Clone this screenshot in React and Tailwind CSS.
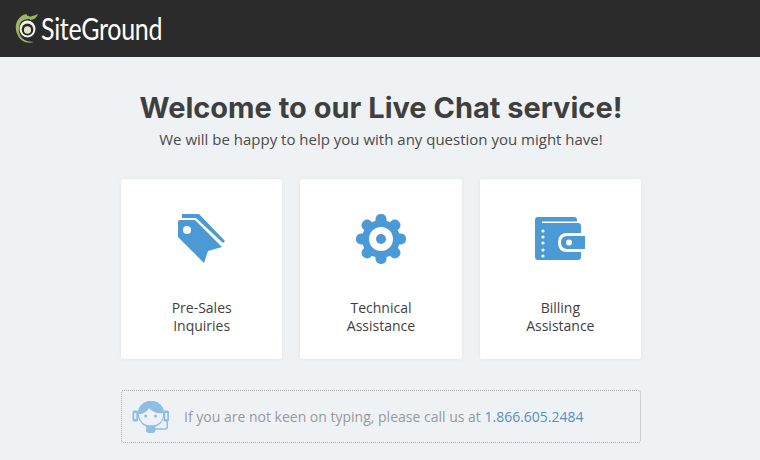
function Logo() {
  return (
    <div className="flex items-center">
      <svg width="26" height="32" viewBox="0 0 26 32" className="shrink-0">
        <path d="M8 2 C3 5 0 10 1 17 C2 23 6 27 8 28 C11 30 16 30 19 29 C15 29 10 28 7 25 C3 21 3 13 6 9 C9 6 13 6 15 6 C16 4 14 2 12 3 C13 1 10 1 8 2 Z" fill="#9db565" />
        <path d="M14 4 C18 3 21 2 23 1 C22 4 19 7 15 7 Z" fill="#9db565" />
        <ellipse cx="12.5" cy="16" rx="8" ry="8.5" fill="#f4f4ee" />
        <ellipse cx="12.5" cy="16.5" rx="5.8" ry="6" fill="#262626" />
        <ellipse cx="12.5" cy="17" rx="3.6" ry="3.8" fill="#dfe6c8" />
      </svg>
      <span className="inline-block text-[25px] leading-none tracking-[-0.3px] text-white scale-y-[1.2] ml-[0px] font-['Lato',sans-serif]">SiteGround</span>
    </div>
  );
}

function Tag() {
  return (
    <svg width="48" height="52" viewBox="0 0 48 52">
      <path d="M2 7 H17 L44 34 L30 38 L26 50 L0 24 V9 Q0 7 2 7 Z" fill="#4b9ad6" />
      <path d="M4 1 H21 L47 28 L45 30 L18 5 H4 Z" fill="#4b9ad6" />
      <circle cx="9" cy="17" r="4" fill="#fff" />
    </svg>
  );
}

function Gear() {
  const teeth = [0, 45, 90, 135, 180, 225, 270, 315];
  return (
    <svg width="52" height="52" viewBox="0 0 52 52">
      <circle cx="26" cy="26" r="19" fill="#4b9ad6" />
      {teeth.map((a) => (
        <rect key={a} x="20.5" y="1" width="11" height="12" rx="5" fill="#4b9ad6" transform={`rotate(${a} 26 26)`} />
      ))}
      <circle cx="26" cy="26" r="12" fill="#fff" />
      <circle cx="26" cy="26" r="5" fill="#4b9ad6" />
    </svg>
  );
}

function Wallet() {
  return (
    <svg width="50" height="43" viewBox="0 0 50 43" className="mb-[2px]">
      <path d="M3 0 H39 Q42 0 42 3 V4.5 H7 V6 H43 Q46 6 46 9 V16 H32 Q23 16 23 25.5 Q23 35 32 35 H46 V40 Q46 43 43 43 H3 Q0 43 0 40 V3 Q0 0 3 0 Z" fill="#4b9ad6" />
      <path d="M32 19 H50 V32 H32 Q26 32 26 25.5 Q26 19 32 19 Z" fill="#4b9ad6" />
      <circle cx="34" cy="25.5" r="3" fill="#fff" />
      {[14, 20, 26, 33, 39].map((y) => (
        <circle key={y} cx="8" cy={y} r="1.6" fill="#fff" />
      ))}
    </svg>
  );
}

function Agent() {
  return (
    <svg width="37" height="33" viewBox="0 0 37 33" className="mt-[1px]">
      <circle cx="19" cy="13" r="13.3" fill="#8fbee4" />
      <path d="M7 13 C11 13 15 11 17 7 C20 11 26 13 31 12 C32 20 26 24.5 19 24.5 C12 24.5 7 20 7 13 Z" fill="#eef1f5" />
      <rect x="0.5" y="9.5" width="5.5" height="11" rx="1.5" fill="#8fbee4" />
      <rect x="2.3" y="12" width="2" height="6" fill="#eef1f5" />
      <rect x="31.5" y="9.5" width="5.5" height="11" rx="1.5" fill="#8fbee4" />
      <rect x="33.3" y="12" width="2" height="6" fill="#eef1f5" />
      <circle cx="13.7" cy="15" r="1.5" fill="#8fbee4" />
      <circle cx="23.5" cy="15" r="1.5" fill="#8fbee4" />
      <path d="M35.3 20 V26 Q35.3 28 33 28 H23" stroke="#8fbee4" strokeWidth="1.5" fill="none" />
      <rect x="14" y="24.5" width="9.5" height="7.5" rx="3" fill="#8fbee4" />
    </svg>
  );
}

function Card({ icon, lines }) {
  return (
    <div className="bg-white rounded-[3px] h-[180px] flex flex-col items-center shadow-[0_0_4px_rgba(0,0,0,0.06)]">
      <div className="h-[120px] w-full flex items-center justify-center">{icon}</div>
      <div className="text-[14px] leading-[18px] text-[#3f3f3f] text-center">
        {lines.map((l) => (
          <div key={l}>{l}</div>
        ))}
      </div>
    </div>
  );
}

export default function App() {
  return (
    <div className="w-[760px] h-[460px] overflow-hidden bg-[#eff2f5] font-['Open_Sans',sans-serif]">
      <header className="h-[57px] bg-[#2b2b2b] flex items-center pl-[15px]">
        <Logo />
      </header>
      <main className="w-[520px] ml-[121px]">
        <h1 className="mt-[33px] text-center text-[29px] leading-[36px] font-bold text-[#3f3f3f] font-['Inter',sans-serif] whitespace-nowrap">
          Welcome to our Live Chat service!
        </h1>
        <p className="mt-[3px] text-center text-[15px] leading-[20px] text-[#4a4a4a]">
          We will be happy to help you with any question you might have!
        </p>
        <div className="mt-[30px] grid grid-cols-3 gap-x-[18px]">
          <Card icon={<Tag />} lines={["Pre-Sales", "Inquiries"]} />
          <Card icon={<Gear />} lines={["Technical", "Assistance"]} />
          <Card icon={<Wallet />} lines={["Billing", "Assistance"]} />
        </div>
        <div className="mt-[31px] h-[53px] rounded-[3px] border border-dotted border-[#a9adb0] flex items-center pl-[10px]">
          <Agent />
          <span className="ml-[15px] text-[14px] text-[#959a9e]">
            If you are not keen on typing, please call us at{" "}
            <span className="text-[#5a8fc0]">1.866.605.2484</span>
          </span>
        </div>
      </main>
    </div>
  );
}
